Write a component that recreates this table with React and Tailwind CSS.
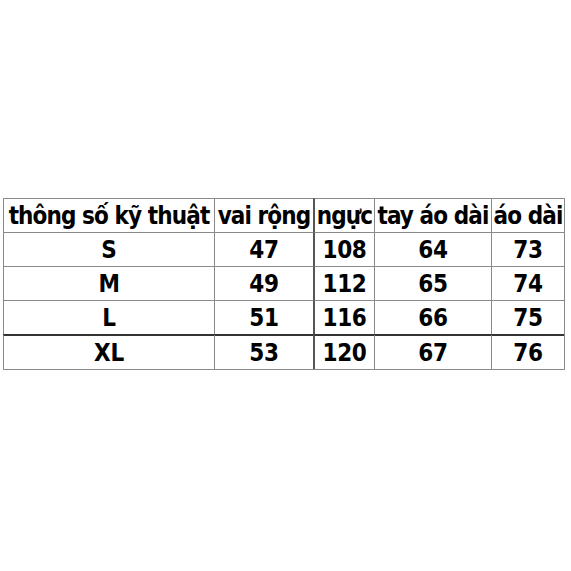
export default function App() {
  const rows = [
    ["S", "47", "108", "64", "73"],
    ["M", "49", "112", "65", "74"],
    ["L", "51", "116", "66", "75"],
    ["XL", "53", "120", "67", "76"],
  ];
  const widths = ["w-[211px]", "w-[99px]", "w-[61px]", "w-[117px]", "w-[73px]"];
  const header = ["thông số kỹ thuật", "vai rộng", "ngực", "tay áo dài", "áo dài"];
  const cellBase = "flex items-center justify-center border-t border-l border-[#8a8a8a] whitespace-nowrap overflow-visible";
  const leftBorder = (i) => (i === 2 ? "border-l-2 border-l-[#555]" : "");
  return (
    <div className="w-[571px] h-[571px] bg-white pt-[198px] pl-[3px]" style={{ fontFamily: '"DejaVu Sans Condensed", "DejaVu Sans", Verdana, sans-serif' }}>
      <div className="w-[562px] border-r border-b border-[#8a8a8a] font-bold text-black text-[24px]">
        <div className="flex h-[34px] tracking-[-0.9px]">
          {header.map((h, i) => (
            <div key={i} className={`${cellBase} ${widths[i]} ${leftBorder(i)}`}>{h}</div>
          ))}
        </div>
        {rows.map((r, ri) => (
          <div key={ri} className={`flex tracking-[-0.3px] ${ri === 3 ? "h-[35px]" : "h-[34px]"}`}>
            {r.map((c, i) => (
              <div key={i} className={`${cellBase} ${widths[i]} ${leftBorder(i)} ${ri === 3 ? "border-t-2 border-t-[#333]" : ""}`}>{c}</div>
            ))}
          </div>
        ))}
      </div>
    </div>
  );
}
